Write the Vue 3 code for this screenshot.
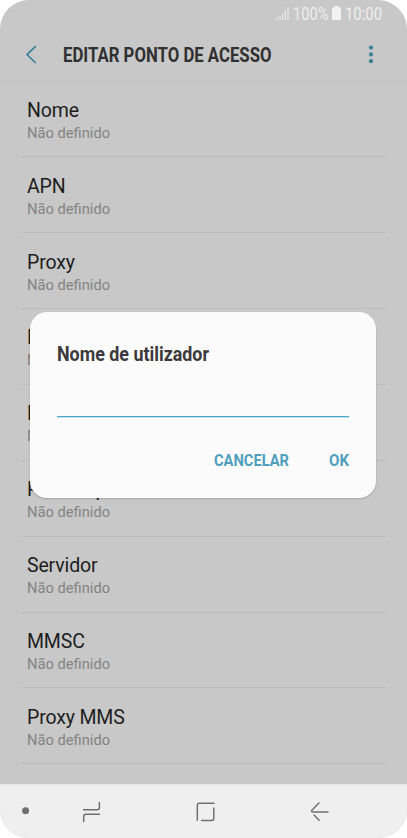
<script setup>
const rows = ['Nome', 'APN', 'Proxy', 'Porta', 'Nome de utilizador', 'Palavra-passe', 'Servidor', 'MMSC', 'Proxy MMS']
</script>

<template>
  <div class="phone">
    <div class="status">
      <svg class="signal" width="14" height="14" viewBox="0 0 14 14" fill="#e6e6e6">
        <path d="M0 13L2.8 10.5V13zM4.4 9H5.7v4H4.4zM7 6h1.3v7H7zM9.6 3.2h1.4V13H9.6zM12.3 0h1.4v13h-1.4z" />
      </svg>
      <svg class="percent" width="36" height="18"><text x="0" y="14.8" textLength="35.5" lengthAdjust="spacingAndGlyphs">100%</text></svg>
      <svg class="battery" width="9" height="14" viewBox="0 0 9 14" fill="#f2f2f2">
        <path d="M2.5 0h4v1.2H8q1 0 1 1V13q0 1-1 1H1q-1 0-1-1V2.2q0-1 1-1h1.5z" />
      </svg>
      <svg class="clock" width="38" height="18"><text x="0" y="14.8" textLength="37" lengthAdjust="spacingAndGlyphs">10:00</text></svg>
    </div>

    <header class="header">
      <svg class="back" width="12" height="20" viewBox="0 0 12 20" fill="none" stroke="#357f9b" stroke-width="1.6">
        <path d="M10.8 1.2L2 9.6l8.8 8.4" />
      </svg>
      <svg class="heading" width="212" height="26"><text x="0" y="20" textLength="208.5" lengthAdjust="spacingAndGlyphs">EDITAR PONTO DE ACESSO</text></svg>
      <svg class="more" width="6" height="20" viewBox="0 0 6 20" fill="#3d7f99">
        <circle cx="3" cy="2.6" r="2.1" /><circle cx="3" cy="9.4" r="2.1" /><circle cx="3" cy="16.2" r="2.1" />
      </svg>
    </header>

    <main class="list">
      <div v-for="row in rows" :key="row" class="row">
        <div class="name">{{ row }}</div>
        <div class="value">Não definido</div>
      </div>
    </main>

    <nav class="nav">
      <svg width="407" height="54" viewBox="0 0 407 54" fill="none" stroke="#707070" stroke-width="1.5">
        <circle cx="25.6" cy="26.8" r="3.5" fill="#707070" stroke="none" />
        <path d="M83 25.8H97.2Q99.4 25.8 99.4 23.6V18M83.7 38V32.6Q83.7 30.3 86 30.3H100" />
        <path d="M197.3 36.8V21.5Q197.3 19.3 199.5 19.3H214.5M213.8 23.5V34.2Q213.8 36.4 211.6 36.4H201" />
        <path d="M319.4 18.6L311.6 26.6Q311.2 27.9 312.8 27.9H328.5M313.8 30.8L319.6 36.8" />
      </svg>
    </nav>

    <section class="dialog">
      <svg class="dialog-title" width="292" height="28"><text x="0" y="20" textLength="152" lengthAdjust="spacingAndGlyphs">Nome de utilizador</text></svg>
      <div class="input"></div>
      <div class="actions">
        <svg width="75" height="24"><text x="0" y="18" textLength="75" lengthAdjust="spacingAndGlyphs">CANCELAR</text></svg>
        <svg width="20" height="24"><text x="0" y="18" textLength="20" lengthAdjust="spacingAndGlyphs">OK</text></svg>
      </div>
    </section>
  </div>
</template>

<style>
body { background: #fff; }
</style>

<style scoped>
.phone {
  position: relative;
  box-sizing: border-box;
  width: 407px;
  height: 838px;
  overflow: hidden;
  display: flex;
  flex-direction: column;
  border-radius: 29px;
  background: #c8c8c8;
  font-family: Roboto, sans-serif;
}
svg { display: block; flex: none; overflow: visible; }
.status {
  display: flex;
  height: 28px;
  box-sizing: border-box;
  padding: 5px 24.5px 0 0;
  justify-content: flex-end;
}
.status text { font-size: 17.8px; fill: #eee; }
.signal { margin: 2px 4.5px 0 0; }
.battery { margin: 1px 4px 0 2.5px; }
.header {
  display: flex;
  align-items: center;
  height: 53.5px;
  box-sizing: border-box;
  padding: 1.5px 33px 0 25px;
  border-bottom: 1.5px solid #bebebe;
}
.heading { margin-left: 26px; }
.heading text { font-size: 19.5px; font-weight: 700; fill: #303030; }
.more { margin-left: auto; }
.list { flex: 1; min-height: 0; padding: 0 21px 0 20.5px; }
.row {
  box-sizing: border-box;
  height: 75.87px;
  padding: 16.3px 0 0 6.5px;
  border-bottom: 1px solid #bcbcbc;
}
.name { font-size: 19.5px; line-height: 25px; letter-spacing: -0.15px; color: #1d1d1d; }
.value { font-size: 14.7px; line-height: 20px; color: #838383; }
.nav { height: 54.5px; flex: none; background: #efefef; box-shadow: inset 0 1px #e6e6e6; }
.dialog {
  position: absolute;
  left: 30px;
  top: 312px;
  width: 346.4px;
  height: 186px;
  box-sizing: border-box;
  padding: 29px 27px 0;
  border-radius: 17px;
  background: #fbfbfb;
  box-shadow: 0 1px 2px rgba(0, 0, 0, 0.18);
}
.dialog-title text { font-size: 20px; font-weight: 700; fill: #3b393b; }
.input { height: 47px; border-bottom: 1px solid #4ba6c7; box-shadow: 0 1px #c3e1ec; }
.actions { display: flex; justify-content: flex-end; gap: 40px; margin-top: 31px; }
.actions text { font-size: 17px; font-weight: 700; fill: #4f9fbd; }
</style>
